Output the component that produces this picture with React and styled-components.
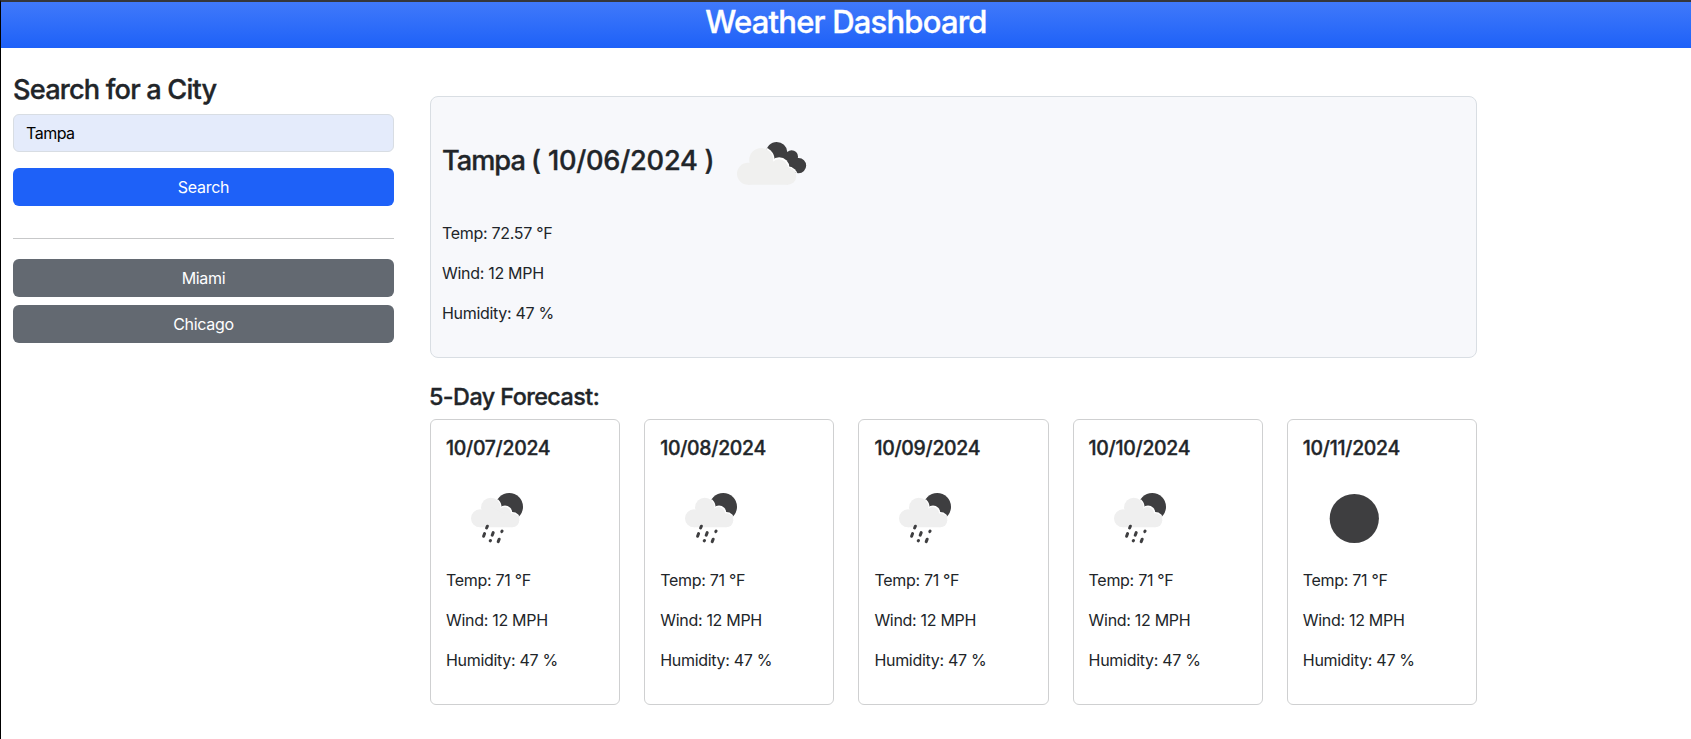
import React, { useId } from "react";
import styled, { createGlobalStyle } from "styled-components";

const GlobalStyle = createGlobalStyle`
  *, *::before, *::after { box-sizing: border-box; }
  body {
    margin: 0;
    background: #fff;
    color: #212529;
    font-family: Inter, "Liberation Sans", sans-serif;
    font-size: 16px;
    line-height: 24px;
    letter-spacing: -0.3px;
  }
`;

const Page = styled.div`
  min-height: 739px;
  border-top: 2px solid #35363a;
  border-left: 1px solid #000;
`;

const Header = styled.header`
  height: 46px;
  padding-top: 1px;
  background: linear-gradient(180deg, #4079fa, #1e61f8);
  color: #fff;
  text-align: center;
`;

const Heading = styled.h2`
  margin: 0 0 8px;
  font-weight: 500;
  -webkit-text-stroke: 0.35px currentColor;
  line-height: ${(p) => p.$line}px;
  font-size: ${(p) => p.$size}px;
  letter-spacing: ${(p) => p.$spacing || 0}px;
`;

const Columns = styled.div`
  display: flex;
`;

const Sidebar = styled.aside`
  width: 405px;
  padding: 25px 12px 24px;
`;

const SidebarTitle = styled(Heading)`
  margin-bottom: 7px;
`;

const SearchForm = styled.form`
  display: flex;
  flex-direction: column;
  gap: 16px;
`;

const CityInput = styled.input`
  width: 100%;
  height: 38px;
  padding: 6px 12px;
  border: 1px solid #d8dde3;
  border-radius: 6px;
  background: #e4ebfb;
  color: #000;
  font: inherit;
  letter-spacing: -0.5px;
  outline: none;
`;

const Button = styled.button`
  width: 100%;
  height: 38px;
  padding: 0 12px;
  border: 0;
  border-radius: 6px;
  background: ${(p) => (p.$primary ? "#1e61f8" : "#636971")};
  color: #fff;
  font: inherit;
  letter-spacing: inherit;
`;

const Divider = styled.hr`
  height: 1px;
  margin: 32px 0 20px;
  border: 0;
  background: #c7c8c9;
`;

const History = styled.div`
  display: flex;
  flex-direction: column;
  gap: 8px;
`;

const Main = styled.main`
  width: 1071px;
  padding: 48px 0 0 24px;
`;

const Today = styled.section`
  height: 262px;
  margin-bottom: 24px;
  padding: 16px 12px 16px 11px;
  border: 1px solid #d9dee3;
  border-radius: 8px;
  background: #f7f8fb;
`;

const TodayTitle = styled(Heading)`
  height: 100px;
`;

const CityName = styled.span`
  letter-spacing: -1px;
`;

const ForecastTitle = styled(Heading)`
  margin: 25px 0 7px -1px;
`;

const Reading = styled.p`
  margin: 0 0 16px;
`;

const Forecast = styled.div`
  display: grid;
  grid-template-columns: repeat(5, 1fr);
  gap: 24px;
`;

const DayCard = styled.article`
  height: 286px;
  padding: 16px 16px 16px 15px;
  border: 1px solid #cfd0d1;
  border-radius: 6px;
`;

const Icon = styled.svg`
  display: ${(p) => (p.$inline ? "inline-block" : "block")};
  width: 100px;
  height: 100px;
  margin-left: 1px;
  vertical-align: middle;
`;

function CloudsIcon() {
  const id = useId();
  return (
    <Icon $inline viewBox="0 0 100 100">
      <clipPath id={id}>
        <circle cx="54.7" cy="39.6" r="10.6" />
        <circle cx="69.6" cy="43.6" r="6.4" />
        <circle cx="76.6" cy="52.6" r="7.6" />
        <path d="M50 43L64 40L76 48L76 60L58 50Z" />
      </clipPath>
      <g clipPath={`url(#${id})`}>
        <rect width="100" height="100" fill="#3e3e40" />
        <g fill="#fff">
          <circle cx="39.2" cy="47" r="13.4" />
          <circle cx="57.2" cy="54.5" r="10.2" />
          <circle cx="65.7" cy="63.2" r="10" />
        </g>
      </g>
      <g fill="#f0f0ef">
        <circle cx="39.2" cy="47" r="12" />
        <circle cx="57" cy="55" r="8.8" />
        <circle cx="26" cy="60.7" r="11" />
        <circle cx="65.7" cy="63.2" r="8.5" />
        <path d="M26 71.7V58L39 46L58 56L66 60V71.7Z" />
      </g>
    </Icon>
  );
}

function RainIcon() {
  const id = useId();
  return (
    <Icon viewBox="0 0 100 100">
      <clipPath id={id}>
        <circle cx="62.2" cy="38.7" r="13.8" />
      </clipPath>
      <g clipPath={`url(#${id})`}>
        <rect width="100" height="100" fill="#3e3e40" />
        <g fill="#fff">
          <circle cx="43.8" cy="39.4" r="10.8" />
          <circle cx="58" cy="45" r="7.4" />
          <circle cx="65.3" cy="52.3" r="8.3" />
        </g>
      </g>
      <g fill="#efefef">
        <circle cx="43.8" cy="39.4" r="9.7" />
        <circle cx="57.6" cy="45.4" r="6.4" />
        <circle cx="33" cy="50.3" r="9" />
        <circle cx="65.3" cy="52.3" r="7" />
        <path d="M33 59.3V47L44 39L58 46L65.3 50V59.3Z" />
      </g>
      <g stroke="#3e3e40" strokeWidth="3" strokeLinecap="round">
        <path d="M40.4 58.2L39.6 60M37.6 65.6L36.6 68.3M46.2 64.6L45.2 67.2M43.5 72.5L43.2 72.9M52.2 71.2L51.2 73.6M55.1 63.1L54.8 63.6" />
      </g>
    </Icon>
  );
}

function ClearIcon() {
  return (
    <Icon viewBox="0 0 100 100">
      <circle cx="50.3" cy="50.5" r="24.6" fill="#3e3e40" />
    </Icon>
  );
}

const days = [
  { date: "10/07/2024", icon: RainIcon },
  { date: "10/08/2024", icon: RainIcon },
  { date: "10/09/2024", icon: RainIcon },
  { date: "10/10/2024", icon: RainIcon },
  { date: "10/11/2024", icon: ClearIcon },
];

function Readings({ temp }) {
  return (
    <>
      <Reading>Temp: {temp} °F</Reading>
      <Reading>Wind: 12 MPH</Reading>
      <Reading>Humidity: 47 %</Reading>
    </>
  );
}

export default function App() {
  return (
    <Page>
      <GlobalStyle />
      <Header>
        <Heading as="h1" $size={31} $line={38.4} $spacing={-0.8}>Weather Dashboard</Heading>
      </Header>
      <Columns>
        <Sidebar>
          <SidebarTitle $size={27.2} $line={33.6} $spacing={-0.82}>Search for a City</SidebarTitle>
          <SearchForm onSubmit={(e) => e.preventDefault()}>
            <CityInput defaultValue="Tampa" aria-label="City" />
            <Button $primary>Search</Button>
          </SearchForm>
          <Divider />
          <History>
            <Button>Miami</Button>
            <Button>Chicago</Button>
          </History>
        </Sidebar>
        <Main>
          <Today>
            <TodayTitle $size={27.2} $line={33.6} $spacing={-0.24}>
              <CityName>Tampa </CityName>( 10/06/2024 ) <CloudsIcon />
            </TodayTitle>
            <Readings temp="72.57" />
          </Today>
          <ForecastTitle as="h3" $size={23.3} $line={28.8} $spacing={-0.53}>5-Day Forecast:</ForecastTitle>
          <Forecast>
            {days.map(({ date, icon: DayIcon }) => (
              <DayCard key={date}>
                <Heading as="h5" $size={19.4} $line={24} $spacing={-0.27}>{date}</Heading>
                <DayIcon />
                <Readings temp="71" />
              </DayCard>
            ))}
          </Forecast>
        </Main>
      </Columns>
    </Page>
  );
}
